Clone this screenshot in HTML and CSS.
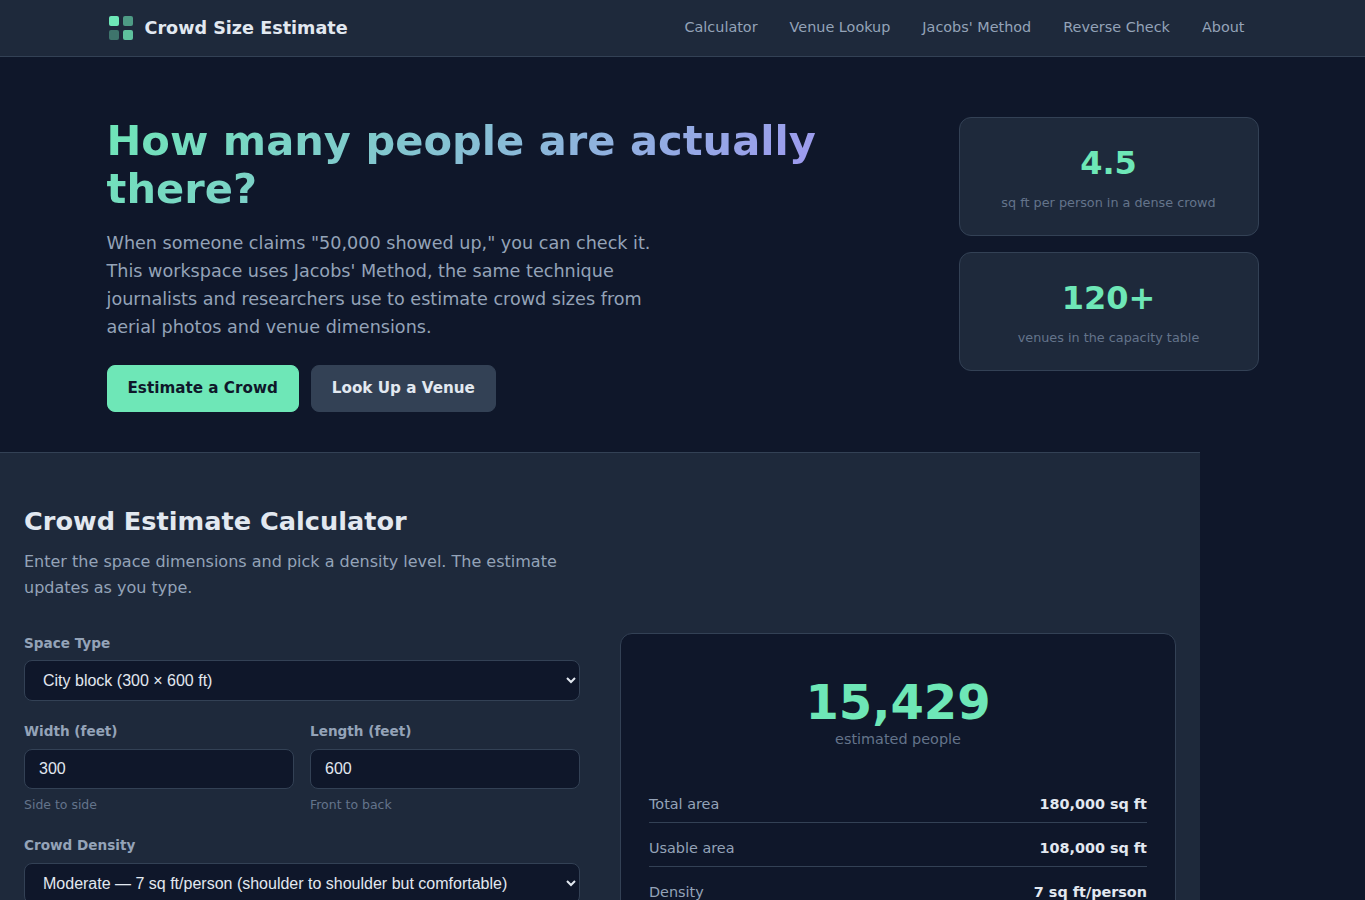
FILE: index.html
```html
<!DOCTYPE html>
<html lang="en">
<head>
    <meta charset="UTF-8">
    <meta name="viewport" content="width=device-width, initial-scale=1.0">
    <title>Crowd Size Estimate</title>
    <link rel="stylesheet" href="styles.css">
</head>
<body>

<header class="site-header">
    <div class="header-inner">
        <a class="logo" href="#">
            <svg width="28" height="28" viewBox="0 0 28 28" fill="#6ee7b7">
                <rect x="2" y="2" width="10" height="10" rx="2"/>
                <rect x="16" y="2" width="10" height="10" rx="2" opacity="0.6"/>
                <rect x="2" y="16" width="10" height="10" rx="2" opacity="0.4"/>
                <rect x="16" y="16" width="10" height="10" rx="2" opacity="0.8"/>
            </svg>
            <span>Crowd Size Estimate</span>
        </a>
        <nav class="main-nav">
            <a href="#calculator">Calculator</a>
            <a href="#venues">Venue Lookup</a>
            <a href="#method">Jacobs' Method</a>
            <a href="#reverse">Reverse Check</a>
            <a href="#about">About</a>
        </nav>
    </div>
</header>

<main>
    <section class="hero">
        <div class="hero-text">
            <h1>How many people are actually there?</h1>
            <p>When someone claims "50,000 showed up," you can check it. This workspace uses Jacobs' Method, the same technique journalists and researchers use to estimate crowd sizes from aerial photos and venue dimensions.</p>
            <div class="hero-actions">
                <a class="btn btn-primary" href="#calculator">Estimate a Crowd</a>
                <a class="btn btn-secondary" href="#venues">Look Up a Venue</a>
            </div>
        </div>
        <div class="hero-stats">
            <div class="stat-card">
                <span class="stat-number">4.5</span>
                <span class="stat-label">sq ft per person in a dense crowd</span>
            </div>
            <div class="stat-card">
                <span class="stat-number">120+</span>
                <span class="stat-label">venues in the capacity table</span>
            </div>
        </div>
    </section>

    <section class="calculator" id="calculator">
        <h2>Crowd Estimate Calculator</h2>
        <p class="section-desc">Enter the space dimensions and pick a density level. The estimate updates as you type.</p>
        <div class="calc-layout">
            <form class="calc-form">
                <div class="form-group">
                    <label for="space">Space Type</label>
                    <select id="space">
                        <option>City block (300 × 600 ft)</option>
                    </select>
                </div>
                <div class="form-row">
                    <div class="form-group">
                        <label for="width">Width (feet)</label>
                        <input type="number" id="width" value="300">
                        <span class="hint">Side to side</span>
                    </div>
                    <div class="form-group">
                        <label for="length">Length (feet)</label>
                        <input type="number" id="length" value="600">
                        <span class="hint">Front to back</span>
                    </div>
                </div>
                <div class="form-group">
                    <label for="density">Crowd Density</label>
                    <select id="density">
                        <option>Moderate — 7 sq ft/person (shoulder to shoulder but comfortable)</option>
                    </select>
                </div>
            </form>
            <div class="result-panel">
                <div class="result-main">
                    <span class="result-number">15,429</span>
                    <span class="result-label">estimated people</span>
                </div>
                <div class="result-details">
                    <div class="detail-row"><span>Total area</span><strong>180,000 sq ft</strong></div>
                    <div class="detail-row"><span>Usable area</span><strong>108,000 sq ft</strong></div>
                    <div class="detail-row"><span>Density</span><strong>7 sq ft/person</strong></div>
                </div>
            </div>
        </div>
    </section>
</main>

</body>
</html>
```
FILE: styles.css
```css
* {
    box-sizing: border-box;
    margin: 0;
    padding: 0;
}

html {
    scrollbar-width: none;
}

body {
    font-family: "DejaVu Sans", sans-serif;
    background-color: #0f172a;
    color: #e2e8f0;
    line-height: 1.6;
}

a {
    text-decoration: none;
}

.site-header {
    background-color: #1e293b;
    border-bottom: 1px solid #334155;
}

.header-inner {
    max-width: 1200px;
    height: 56px;
    margin: 0 auto;
    padding: 0 24px;
    display: flex;
    align-items: center;
    justify-content: space-between;
}

.logo {
    display: flex;
    align-items: center;
    gap: 10px;
    color: #e2e8f0;
    font-size: 1.1rem;
    font-weight: 700;
}

.main-nav {
    display: flex;
    gap: 4px;
}

.main-nav a {
    color: #94a3b8;
    font-size: 0.9rem;
    padding: 6px 14px;
}

.hero {
    max-width: 1200px;
    margin: 0 auto;
    padding: 60px 24px 40px;
    display: grid;
    grid-template-columns: 1fr 300px;
    gap: 48px;
    align-items: start;
}

.hero h1 {
    font-size: 2.6rem;
    line-height: 1.15;
    margin-bottom: 16px;
    background: linear-gradient(135deg, #6ee7b7, #a78bfa);
    -webkit-background-clip: text;
    background-clip: text;
    color: transparent;
}

.hero p {
    max-width: 560px;
    color: #94a3b8;
    font-size: 1.1rem;
    margin-bottom: 24px;
}

.hero-actions {
    display: flex;
    gap: 12px;
}

.btn {
    padding: 10px 20px;
    border: 1px solid transparent;
    border-radius: 8px;
    font-size: 0.95rem;
    font-weight: 600;
}

.btn-primary {
    background-color: #6ee7b7;
    border-color: #6ee7b7;
    color: #0f172a;
}

.btn-secondary {
    background-color: #334155;
    border-color: #334155;
    color: #e2e8f0;
}

.hero-stats {
    display: flex;
    flex-direction: column;
    gap: 16px;
}

.stat-card {
    background-color: #1e293b;
    border: 1px solid #334155;
    border-radius: 12px;
    padding: 20px;
    text-align: center;
}

.stat-number {
    display: block;
    color: #6ee7b7;
    font-size: 2rem;
    font-weight: 700;
}

.stat-label {
    color: #64748b;
    font-size: 0.8rem;
}

/* calculator */
.calculator {
    max-width: 1200px;
    padding: 48px 24px;
    background-color: #1e293b;
    border-top: 1px solid #334155;
}

.calculator h2 {
    font-size: 1.6rem;
    margin-bottom: 8px;
}

.section-desc {
    max-width: 600px;
    color: #94a3b8;
    margin-bottom: 32px;
}

.calc-layout {
    display: grid;
    grid-template-columns: 1fr 1fr;
    gap: 40px;
}

.form-row {
    display: grid;
    grid-template-columns: 1fr 1fr;
    gap: 16px;
}

.form-group {
    margin-bottom: 20px;
}

label {
    display: block;
    color: #94a3b8;
    font-size: 0.85rem;
    font-weight: 600;
    margin-bottom: 6px;
}

select,
input {
    display: block;
    width: 100%;
    padding: 10px 14px;
    background-color: #0f172a;
    border: 1px solid #334155;
    border-radius: 8px;
    color: #e2e8f0;
    font-family: "Liberation Sans", Arial, sans-serif;
    font-size: 1rem;
}

.hint {
    display: block;
    color: #64748b;
    font-size: 0.78rem;
    margin-top: 6px;
}

.result-panel {
    background-color: #0f172a;
    border: 1px solid #334155;
    border-radius: 12px;
    padding: 28px;
}

.result-main {
    text-align: center;
    padding: 16px 0;
    margin-bottom: 26px;
}

.result-number {
    display: block;
    color: #6ee7b7;
    font-size: 3rem;
    font-weight: 700;
    line-height: 1;
    margin-bottom: 2px;
}

.result-label {
    display: block;
    color: #64748b;
    font-size: 0.9rem;
}

.result-details {
    display: flex;
    flex-direction: column;
    gap: 14px;
}

.detail-row {
    display: flex;
    justify-content: space-between;
    padding-bottom: 6px;
    border-bottom: 1px solid #334155;
    font-size: 0.9rem;
    color: #94a3b8;
}

.detail-row strong {
    color: #e2e8f0;
}
```
